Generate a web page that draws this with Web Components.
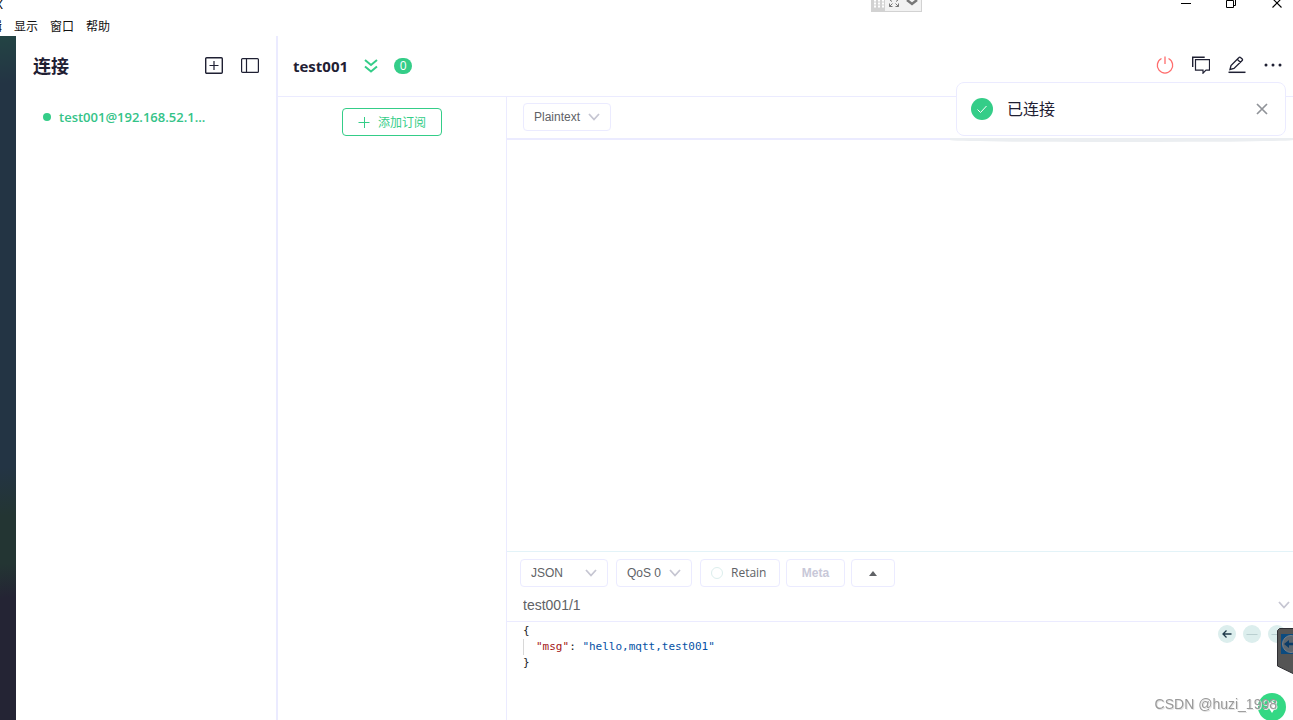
<!DOCTYPE html>
<html lang="zh-CN">
<head>
<meta charset="utf-8">
<meta name="viewport" content="width=device-width, initial-scale=1">
<title>MQTTX</title>
<style>
  :root {
    --green: #34c388;
    --line: #ebebff;
    --ink: #1f2033;
    --text: #606266;
    --mute: #c6c6d2;
  }
  html, body { margin: 0; height: 100%; background: #fff; }
  body {
    font-family: "Liberation Sans", "Noto Sans CJK SC", sans-serif;
    font-size: 12px;
    color: var(--text);
    overflow: hidden;
  }
</style>
</head>
<body>
<mx-app></mx-app>

<script>
const define = (name, html, setup) => {
  const template = document.createElement('template');
  template.innerHTML = html;
  customElements.define(name, class extends HTMLElement {
    constructor() {
      super();
      this.attachShadow({ mode: 'open' }).append(template.content.cloneNode(true));
    }
    connectedCallback() {
      if (setup && !this.ready) { this.ready = true; setup(this, this.shadowRoot); }
    }
  });
};

/* Each icon: width, height, drawing */
const ICONS = {
  plusBox: [18, 17, '<rect x=".7" y=".7" width="16.6" height="15.6" rx="1" stroke-width="1.4"/><path d="M4.500 8.500h9M9 4v9" stroke-width="1.2"/>'],
  panel: [18, 15, '<rect x=".6" y=".6" width="16.8" height="13.8" rx="1" stroke-width="1.200"/><path d="M5.500 1v13" stroke-width="1.200"/>'],
  doubleDown: [14, 14, '<path d="M1 1l6 5 6-5M1 7.500l6 5 6-5" stroke-width="2"/>'],
  plus: [12, 12, '<path d="M.5 6.500h11M6.500 1v11"/>'],
  chevron: [12, 8, '<path d="M1 1l5 5.500L11 1" stroke-width="1.800"/>'],
  power: [18, 18, '<path d="M5.500 2.500a7.700 7.700 0 1 0 7 0M9 .5v7.500" stroke-width="1.300"/>'],
  chat: [18, 18, '<path d="M.7 11V1.200h12" stroke-width="1.400"/><path d="M3.500 3.600h14v10.600h-3.500l-3 3v-3H3.500z" stroke-width="1.200"/>'],
  edit: [18, 18, '<path d="M.5 16.300h17" stroke-width="1.500"/><path d="M2 13.500l1-4L11 1.500a1 1 0 0 1 1.500 0l1.700 1.500a1 1 0 0 1 0 1.500L6 12.500zM9.500 3.500l3 3" stroke-width="1.300"/>'],
  dots: [18, 4, '<g fill="currentColor" stroke="none"><circle cx="2" cy="2" r="1.500"/><circle cx="9" cy="2" r="1.500"/><circle cx="16" cy="2" r="1.500"/></g>'],
  check: [22, 22, '<circle cx="11" cy="11" r="11" fill="currentColor" stroke="none"/><path d="M6.500 11.500l3 3 6-6.500" stroke="#fff" stroke-width="1"/>'],
  close: [12, 12, '<path d="M1 1l10 10M11 1L1 11" stroke-width="1.700"/>'],
  caret: [8, 5, '<path d="M0 5l4-5 4 5z" fill="currentColor" stroke="none"/>'],
  back: [10, 10, '<path d="M9.500 5H1M4.500 1.500L1 5l3.500 3.500" stroke-width="1.300"/>'],
  minus: [12, 10, '<path d="M.5 5.500h11"/>'],
  send: [12, 14, '<path d="M6 13L1 5 6 1l5 4z" fill="currentColor" stroke="none"/>'],
  winMin: [10, 8, '<path d="M0 3.500h10" stroke="#000"/>'],
  winMax: [11, 8, '<path d="M.5 .5h7v7h-7zM2.500 -1.500h7v7h-2" stroke="#000"/>'],
  winClose: [10, 8, '<path d="M.5 -1.500l9 9M9.500 -1.500l-9 9" stroke="#000" stroke-width="1.100"/>'],
  remoteBar: [51, 12, '<path d="M0 0h51v12H0z" fill="#d2d2d2" stroke="none"/><path d="M14 0h36v11H14z" fill="#f2f2f2" stroke="none"/><path d="M3 .5h10M3 3.500h10M3 6.500h10" stroke="#fff" stroke-width="2" stroke-dasharray="2 2"/><path d="M18.500 3.500v3h3M18.500 6.500l3-3M27.500 3.500v3h-3M27.500 6.500l-3-3M19 0l2 1.500M27 0l-2 1.500" stroke="#777"/><path d="M36 0l5 4 5-4" stroke="#777" stroke-width="2.500"/>'],
  remoteTab: [16, 47, '<path d="M.5 2.500l2-2H17V46L.5 38z" fill="#555" stroke="#2e2e33"/><path d="M4 6h12v20H4z" fill="#0b4b80" stroke="none"/><circle cx="14" cy="16" r="8.500" fill="#5d666e" stroke="#7a7f86"/><path d="M16 14.800h-4V12l-5 4 5 4v-2.800h4z" fill="#0b3c68" stroke="none"/>']
};
define('mx-icon', `
  <style>
    :host { display: block; flex: none; line-height: 0; }
    svg { display: block; fill: none; stroke: currentColor; }
  </style>`, (el, root) => {
  const [w, h, body] = ICONS[el.getAttribute('name')];
  root.innerHTML += `<svg width="${w}" height="${h}" viewBox="0 0 ${w} ${h}" aria-hidden="true">${body}</svg>`;
});

define('mx-icon-button', `
  <style>
    :host { display: block; flex: none; }
    button { display: grid; place-items: center; width: 100%; height: 100%; margin: 0; padding: 0; border: 0; background: none; color: inherit; cursor: pointer; }
  </style>
  <button type="button"><slot></slot></button>`, (el, root) => {
  root.querySelector('button').setAttribute('aria-label', el.getAttribute('label'));
});

define('mx-select', `
  <style>
    :host { display: grid; flex: none; box-sizing: border-box; height: 28px; border: 1px solid var(--line); border-radius: 4px; align-items: center; }
    select, mx-icon { grid-area: 1 / 1; }
    select { appearance: none; width: 100%; height: 26px; margin: 0; padding: 0 0 0 10px; border: 0; background: none; font: inherit; font-size: 12px; color: var(--text); }
    mx-icon { justify-self: end; margin-right: 10px; color: var(--mute); pointer-events: none; }
  </style>
  <select></select><mx-icon name="chevron"></mx-icon>`, (el, root) => {
  const select = root.querySelector('select');
  select.setAttribute('aria-label', el.getAttribute('label'));
  select.add(new Option(el.getAttribute('value')));
});

define('mx-titlebar', `
  <style>
    :host { display: flex; height: 17px; overflow: hidden; align-items: flex-start; color: #000; }
    .name { width: 4px; margin-left: -5px; margin-right: auto; line-height: 10px; font-size: 12px; }
    .remote { margin-right: 259px; }
    .window { display: flex; gap: 35px; margin-right: 11px; }
    .window mx-icon-button { height: 8px; }
  </style>
  <span class="name">X</span>
  <mx-icon class="remote" name="remoteBar"></mx-icon>
  <div class="window">
    <mx-icon-button label="最小化"><mx-icon name="winMin"></mx-icon></mx-icon-button>
    <mx-icon-button label="还原"><mx-icon name="winMax"></mx-icon></mx-icon-button>
    <mx-icon-button label="关闭"><mx-icon name="winClose"></mx-icon></mx-icon-button>
  </div>`);

define('mx-menubar', `
  <style>
    :host { display: flex; gap: 12px; height: 19px; margin-left: -10px; color: #111; }
    button { margin: 0; padding: 0; border: 0; background: none; font: inherit; font-size: 12px; line-height: 18px; color: inherit; }
  </style>
  <button type="button">辑</button><button type="button">显示</button><button type="button">窗口</button><button type="button">帮助</button>`);

define('mx-connections', `
  <style>
    :host { display: block; flex: none; box-sizing: border-box; width: 262px; border-right: 2px solid var(--line); }
    header { display: flex; align-items: center; height: 59px; padding: 0 17px; gap: 18px; color: var(--ink); }
    h1 { margin: 0 auto 0 0; padding-top: 2px; font-size: 18px; line-height: 28px; font-weight: 700; }
    ul { margin: 10px 0 0; padding: 0; list-style: none; }
    a { display: flex; align-items: center; gap: 8px; padding: 0 27px; height: 24px; color: var(--green); text-decoration: none; font: 600 13px/24px "Open Sans", sans-serif; }
    i { width: 8px; height: 8px; border-radius: 50%; background: #34cd88; }
  </style>
  <header>
    <h1>连接</h1>
    <mx-icon-button label="新建连接"><mx-icon name="plusBox"></mx-icon></mx-icon-button>
    <mx-icon-button label="折叠侧栏"><mx-icon name="panel"></mx-icon></mx-icon-button>
  </header>
  <ul><li><a href="#test001"><i></i>test001@192.168.52.1...</a></li></ul>`);

define('mx-header', `
  <style>
    :host { display: flex; flex: none; box-sizing: border-box; height: 61px; align-items: center; padding: 0 11px 0 15px; border-bottom: 1px solid var(--line); color: var(--ink); }
    h2 { margin: 0 16px 0 0; font: 700 15px/24px "Open Sans", sans-serif; }
    .more { color: #34cd88; margin-right: 16px; }
    .count { width: 18px; border-radius: 8px; background: #34cd88; color: #fff; text-align: center; font: 12px/16px "Open Sans", sans-serif; }
    .tools { display: flex; align-items: center; gap: 18px; margin-left: auto; padding-bottom: 2px; }
    .power { color: #ff6d6d; }
  </style>
  <h2>test001</h2>
  <mx-icon-button class="more" label="展开"><mx-icon name="doubleDown"></mx-icon></mx-icon-button>
  <span class="count">0</span>
  <div class="tools">
    <mx-icon-button class="power" label="断开连接"><mx-icon name="power"></mx-icon></mx-icon-button>
    <mx-icon-button label="消息"><mx-icon name="chat"></mx-icon></mx-icon-button>
    <mx-icon-button label="编辑"><mx-icon name="edit"></mx-icon></mx-icon-button>
    <mx-icon-button label="更多"><mx-icon name="dots"></mx-icon></mx-icon-button>
  </div>`);

define('mx-subscriptions', `
  <style>
    :host { display: block; flex: none; box-sizing: border-box; width: 229px; padding-top: 11px; border-right: 1px solid var(--line); }
    button { display: flex; align-items: center; gap: 8px; box-sizing: border-box; height: 28px; margin: 0 auto; padding: 0 15px 1px; border: 1px solid #34cd88; border-radius: 4px; background: #fff; color: #34cd88; font: inherit; font-size: 12px; }
  </style>
  <button type="button"><mx-icon name="plus"></mx-icon>添加订阅</button>`);

define('mx-messages', `
  <style>
    :host { display: block; flex: 1; min-height: 80px; }
    .bar { display: flex; padding: 6px 16px 7px; border-bottom: 2px solid var(--line); }
    mx-select { width: 88px; }
  </style>
  <div class="bar"><mx-select label="格式" value="Plaintext"></mx-select></div>
  <slot></slot>`);

define('mx-editor', `
  <style>
    :host { display: flex; justify-content: space-between; align-items: flex-start; box-sizing: border-box; min-height: 98px; padding: 1px 0 0 16px; }
    pre { margin: 0; font: 11px/16px "DejaVu Sans Mono", monospace; color: #222; outline: 0; }
    .key { color: #a31515; }
    .str { color: #0451a5; }
    .in { display: block; padding-left: 12px; border-left: 1px solid #d8d8d8; }
    .nav { display: flex; gap: 7px; margin: 2px 7px 0 0; }
    .nav mx-icon-button { width: 18px; height: 18px; border-radius: 50%; background: #dceeed; color: #b9cfd0; }
    .nav .back { color: #1f3a4a; }
  </style>
  <pre role="textbox" aria-label="消息内容" contenteditable="true" spellcheck="false"><span>{</span><span class="in"><span class="key">"msg"</span>: <span class="str">"hello,mqtt,test001"</span></span><span>}</span></pre>
  <div class="nav">
    <mx-icon-button class="back" label="上一条"><mx-icon name="back"></mx-icon></mx-icon-button>
    <mx-icon-button label="清除"><mx-icon name="minus"></mx-icon></mx-icon-button>
    <mx-icon-button label="下一条"><mx-icon name="minus"></mx-icon></mx-icon-button>
  </div>`);

define('mx-publish', `
  <style>
    :host { display: block; flex: none; border-top: 1px solid #e3f3f8; }
    .options { display: flex; align-items: center; gap: 8px; padding: 7px 13px 2px; }
    .format { width: 88px; } .qos { width: 76px; }
    .extra { display: flex; gap: 6px; }
    label, .extra button { display: flex; align-items: center; box-sizing: border-box; height: 28px; margin: 0; border: 1px solid var(--line); border-radius: 4px; background: #fff; color: var(--text); }
    label { width: 80px; padding-left: 10px; gap: 8px; font: 12px/26px "Open Sans", sans-serif; }
    input[type=checkbox] { appearance: none; box-sizing: border-box; width: 12px; height: 12px; margin: 0; border: 1px solid #dceeed; border-radius: 50%; }
    .extra button { justify-content: center; padding: 0; font: bold 12px "Liberation Sans", sans-serif; }
    .extra .meta { width: 59px; color: #c8c8d8; }
    .extra .toggle { width: 44px; }
    .topic { display: flex; align-items: center; height: 32px; padding-right: 3px; border-bottom: 1px solid var(--line); color: var(--mute); }
    .topic input { flex: 1; min-width: 0; height: 30px; margin: 0; padding: 0 0 0 16px; border: 0; outline: 0; background: none; font: 14px "Liberation Sans", sans-serif; color: var(--text); }
  </style>
  <div class="options">
    <mx-select class="format" label="格式" value="JSON"></mx-select>
    <mx-select class="qos" label="服务质量" value="QoS 0"></mx-select>
    <div class="extra">
      <label><input type="checkbox">Retain</label>
      <button class="meta" type="button" disabled>Meta</button>
      <button class="toggle" type="button" aria-label="收起"><mx-icon name="caret"></mx-icon></button>
    </div>
  </div>
  <div class="topic">
    <input type="text" aria-label="主题" value="test001/1">
    <mx-icon-button label="历史主题"><mx-icon name="chevron"></mx-icon></mx-icon-button>
  </div>
  <mx-editor></mx-editor>`);

define('mx-toast', `
  <style>
    :host { position: fixed; top: 82px; right: 7px; display: flex; align-items: center; box-sizing: border-box; width: 330px; height: 54px; padding: 0 17px 0 14px; border: 1px solid var(--line); border-radius: 8px; background: #fff; color: var(--ink); }
    :host::after { content: ""; position: absolute; left: -7px; right: -8px; top: 55px; height: 4px; border-radius: 0 0 50% 50%; background: #ebeef1; }
    .ok { color: #34cd88; margin-right: 14px; }
    p { margin: 0 auto 0 0; padding-top: 2px; font-size: 16px; line-height: 24px; }
    .close { color: #909399; }
  </style>
  <mx-icon class="ok" name="check"></mx-icon>
  <p role="status"><slot></slot></p>
  <mx-icon-button class="close" label="关闭通知"><mx-icon name="close"></mx-icon></mx-icon-button>`);

define('mx-app', `
  <style>
    :host { display: flex; flex-direction: column; height: 100vh; }
    .body { display: flex; flex: 1; min-height: 0; }
    .desktop { flex: none; width: 16px; background: linear-gradient(172deg, #234444 0, #233444 7%, #233444 63%, #233533 70%, #233533 77%, #242434 82%); }
    main, .work { display: flex; flex: 1; flex-direction: column; min-width: 0; min-height: 0; }
    .panes { display: flex; flex: 1; min-height: 0; }
    .send { position: fixed; right: 7px; bottom: -1px; width: 28px; height: 28px; border-radius: 50%; background: #34d884; color: #fff; }
    .remote { position: fixed; right: 0; bottom: 45px; }
    .mark { position: fixed; right: 16px; bottom: 6px; font-size: 14px; line-height: 20px; color: #999; text-shadow: 1px 1px 0 #e4e4e4; }
  </style>
  <mx-titlebar></mx-titlebar>
  <mx-menubar></mx-menubar>
  <div class="body">
    <div class="desktop"></div>
    <mx-connections></mx-connections>
    <main>
      <mx-header></mx-header>
      <div class="panes">
        <mx-subscriptions></mx-subscriptions>
        <div class="work">
          <mx-messages></mx-messages>
          <mx-publish></mx-publish>
        </div>
      </div>
    </main>
  </div>
  <mx-toast>已连接</mx-toast>
  <mx-icon class="remote" name="remoteTab"></mx-icon>
  <mx-icon-button class="send" label="发送"><mx-icon name="send"></mx-icon></mx-icon-button>
  <span class="mark">CSDN @huzi_1998</span>`);
</script>
</body>
</html>
